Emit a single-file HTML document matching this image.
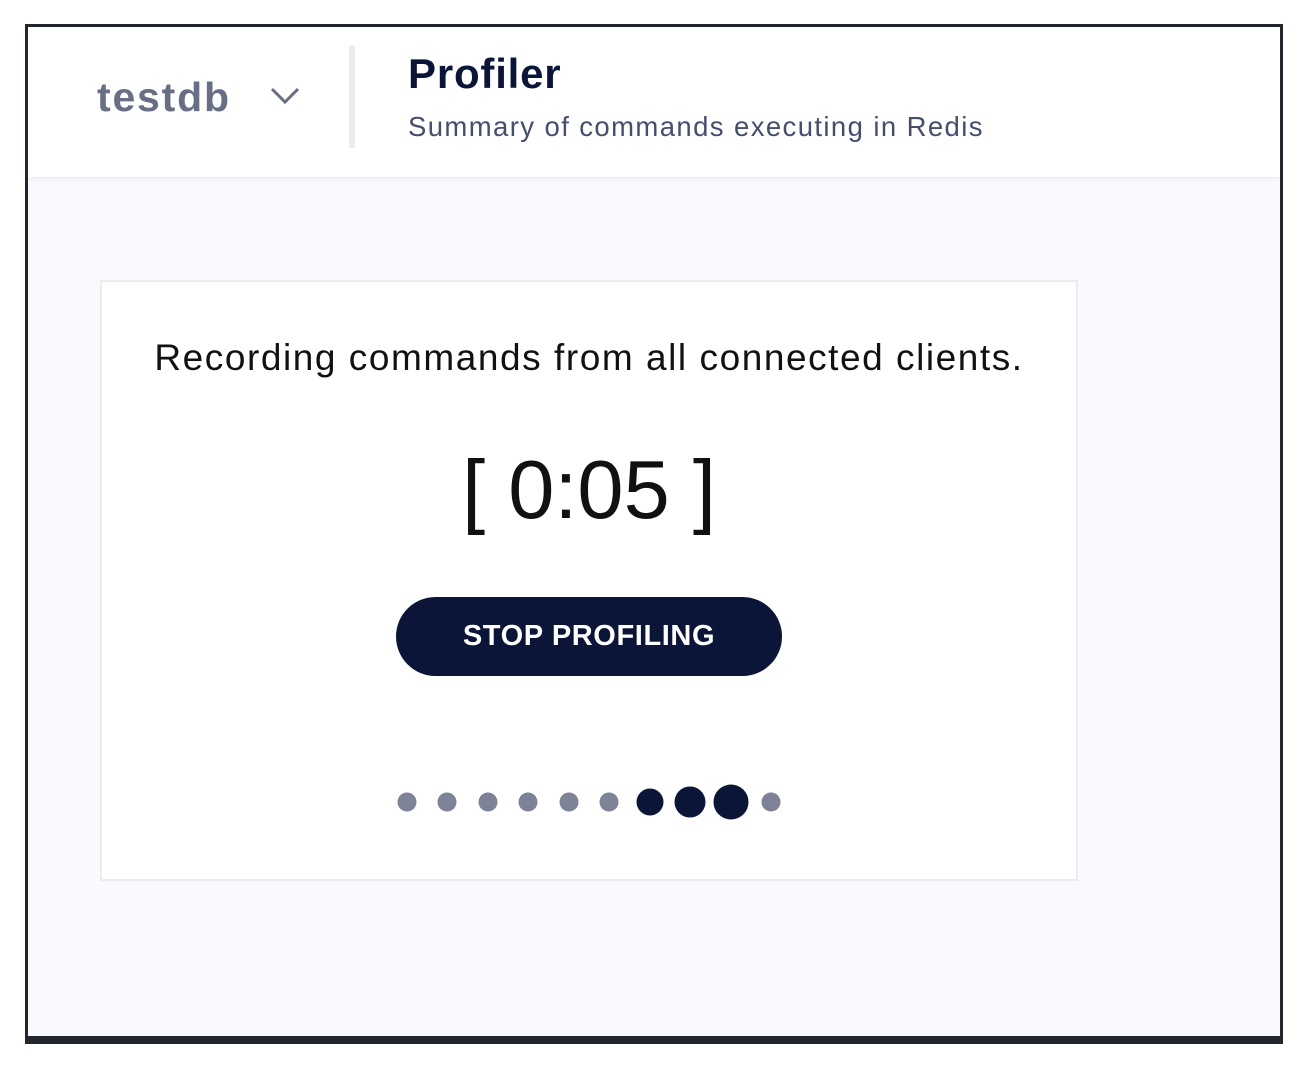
<!DOCTYPE html>
<html><head><style>
*{margin:0;padding:0;box-sizing:border-box}
body{width:1308px;height:1066px;background:#fff;position:relative;font-family:"Liberation Sans",sans-serif;overflow:hidden}
.frame{position:absolute;left:25px;top:24px;width:1258px;height:1020px;border:3px solid #23252d;border-bottom-width:8px;background:#f9fafd;overflow:hidden}
.hdr{position:absolute;left:0;top:0;right:0;height:150px;background:#fff;box-shadow:0 2px 4px rgba(0,0,0,.06)}
.db{position:absolute;left:69px;top:47px;font-size:41px;font-weight:bold;color:#686e84;letter-spacing:1.8px}
.chev{position:absolute;left:240px;top:58px}
.div{position:absolute;left:321px;top:19px;width:6px;height:102px;background:#ececee}
.t{position:absolute;left:380px;top:23px;font-size:42px;font-weight:bold;color:#0a1538;letter-spacing:0.8px}
.s{position:absolute;left:380px;top:84px;font-size:27.5px;color:#464e6c;letter-spacing:1.4px}
.card{position:absolute;left:72px;top:253px;width:978px;height:601px;background:#fff;border:2px solid #ececee}
.rec{position:absolute;left:0;right:0;top:55px;text-align:center;font-size:37px;color:#111;letter-spacing:1.55px}
.tm{position:absolute;left:0;right:0;top:160px;text-align:center;font-size:83px;color:#111}
.btn{position:absolute;left:294px;top:315px;width:386px;height:79px;border-radius:40px;background:#0a1538;color:#fff;font-weight:bold;font-size:29px;text-align:center;line-height:79px;letter-spacing:0.6px}
.d{position:absolute;border-radius:50%;transform:translate(-50%,-50%)}
.g{width:19px;height:19px;background:#7d8296}
.k{background:#0a1538}
</style></head><body>
<div class="frame">
<div class="hdr">
<div class="db">testdb</div>
<svg class="chev" width="34" height="22" viewBox="0 0 34 22"><path d="M4 4 L17 17 L30 4" fill="none" stroke="#686e84" stroke-width="3"/></svg>
<div class="div"></div>
<div class="t">Profiler</div>
<div class="s">Summary of commands executing in Redis</div>
</div>
<div class="card">
<div class="rec">Recording commands from all connected clients.</div>
<div class="tm">[ 0:05 ]</div>
<div class="btn">STOP PROFILING</div>
<div class="d g" style="left:305px;top:520px"></div>
<div class="d g" style="left:345px;top:520px"></div>
<div class="d g" style="left:386px;top:520px"></div>
<div class="d g" style="left:426px;top:520px"></div>
<div class="d g" style="left:467px;top:520px"></div>
<div class="d g" style="left:507px;top:520px"></div>
<div class="d k" style="left:548px;top:520px;width:27px;height:27px"></div>
<div class="d k" style="left:588px;top:520px;width:31px;height:31px"></div>
<div class="d k" style="left:629px;top:520px;width:35px;height:35px"></div>
<div class="d g" style="left:669px;top:520px"></div>
</div>
</div>
</body></html>
